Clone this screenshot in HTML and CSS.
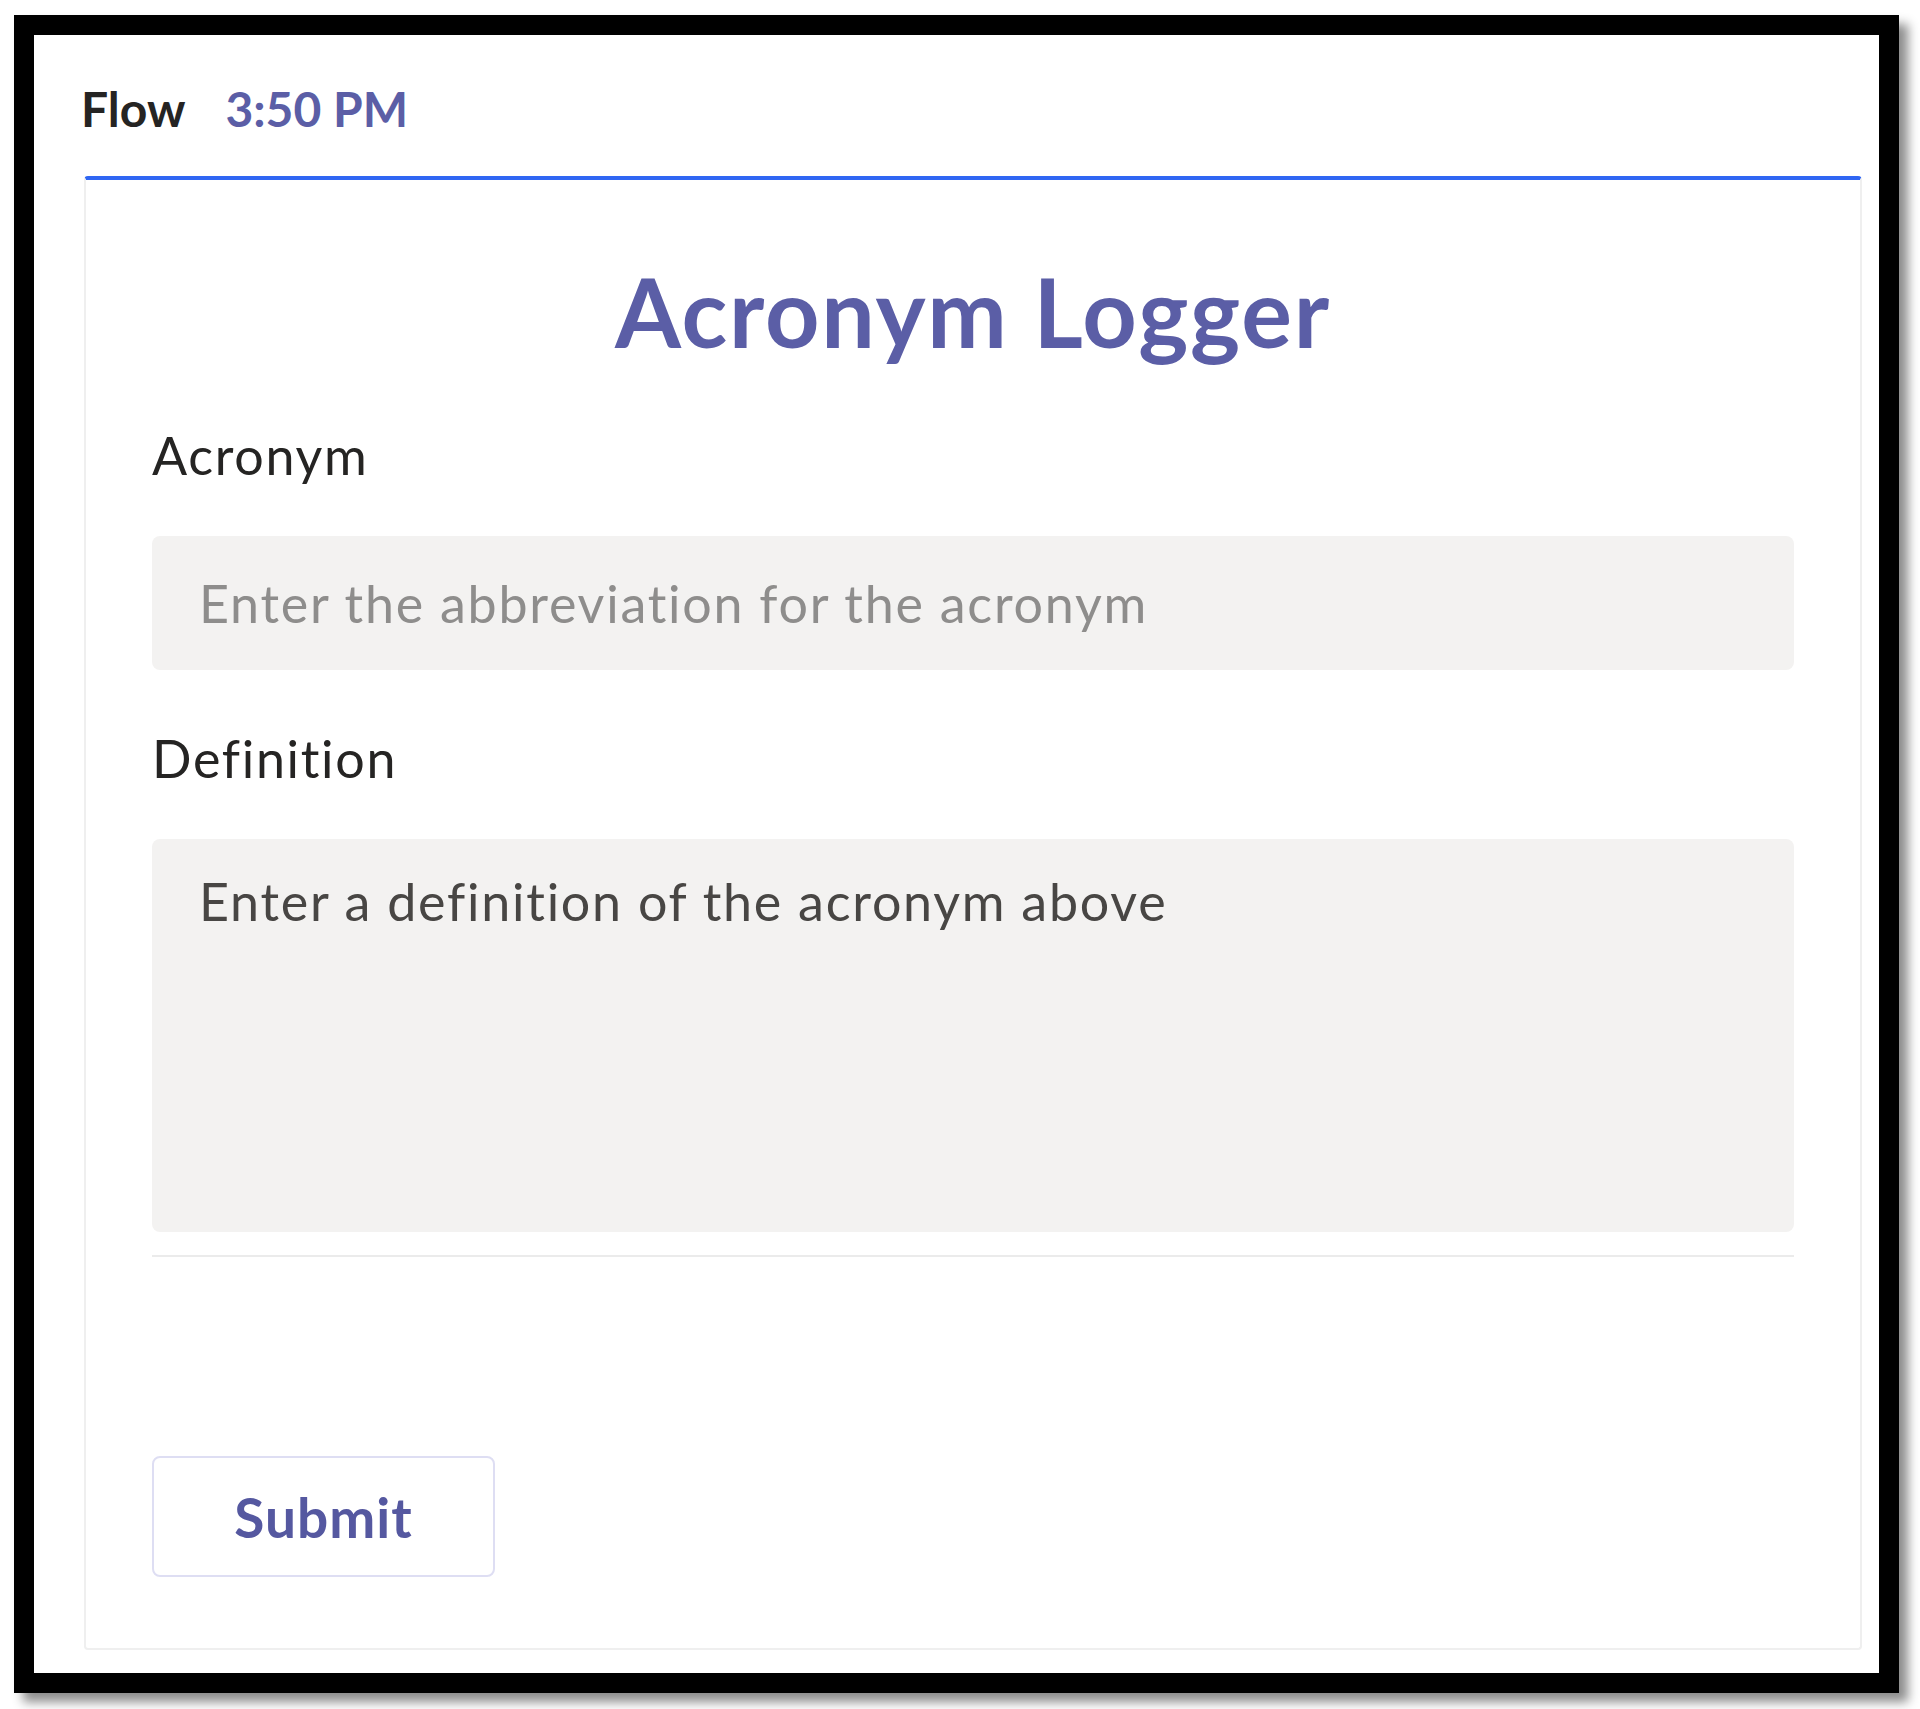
FILE: index.html
```html
<!DOCTYPE html>
<html lang="en">
<head>
<meta charset="utf-8">
<title>Acronym Logger</title>
<link rel="stylesheet" href="styles.css">
</head>
<body>
<div class="frame">
  <div class="header">
    <span class="sender">Flow</span>
    <span class="time">3:50 PM</span>
  </div>
  <div class="card">
    <h1 class="title">Acronym Logger</h1>
    <div class="field">
      <div class="label">Acronym</div>
      <div class="input placeholder">Enter the abbreviation for the acronym</div>
    </div>
    <div class="field">
      <div class="label">Definition</div>
      <div class="textarea">Enter a definition of the acronym above</div>
    </div>
    <div class="divider"></div>
    <div class="actions">
      <button class="submit" type="button">Submit</button>
    </div>
  </div>
</div>
</body>
</html>
```
FILE: styles.css
```css
html, body {
  margin: 0;
  padding: 0;
  background: #ffffff;
}
body {
  font-family: "Lato", "Open Sans", "Noto Sans", sans-serif;
  font-variant-ligatures: none;
  width: 1920px;
  height: 1709px;
  overflow: hidden;
}
.frame {
  box-sizing: border-box;
  margin: 15px 0 0 14px;
  width: 1885px;
  height: 1678px;
  border: 20px solid #000;
  background: #fff;
  box-shadow: 9px 9px 10px rgba(0, 0, 0, 0.45);
  display: flex;
  flex-direction: column;
  padding: 45px 17px 0 50px;
}
.header {
  display: flex;
  align-items: baseline;
  gap: 40px;
  height: 58px;
  line-height: 58px;
  margin-left: -3px;
  margin-bottom: 38px;
}
.sender {
  font-size: 48px;
  font-weight: 700;
  color: #252423;
}
.time {
  font-size: 48px;
  font-weight: 700;
  color: #5b5ea6;
}
.card {
  box-sizing: border-box;
  width: 1778px;
  height: 1474px;
  border: 2px solid #efefef;
  border-top: 4px solid #2f66f3;
  border-radius: 4px;
  padding: 74px 66px 0 66px;
  display: flex;
  flex-direction: column;
}
.title {
  margin: 0;
  font-size: 95px;
  line-height: 114px;
  font-weight: 700;
  letter-spacing: 1.8px;
  text-align: center;
  color: #5b5ea6;
}
.field {
  display: flex;
  flex-direction: column;
  margin-top: 56px;
}
.field + .field {
  margin-top: 57px;
}
.label {
  font-size: 52px;
  line-height: 62px;
  letter-spacing: 1.7px;
  color: #252423;
  margin-bottom: 50px;
}
.input, .textarea {
  box-sizing: border-box;
  background: #f3f2f1;
  border-radius: 8px;
  font-size: 52px;
  line-height: 62px;
  letter-spacing: 1.75px;
  padding: 0 47px;
}
.input {
  height: 134px;
  display: flex;
  align-items: center;
}
.placeholder {
  color: #8e8d8c;
}
.textarea {
  height: 393px;
  padding-top: 31px;
  color: #484644;
}
.divider {
  height: 2px;
  background: #ebebeb;
  margin-top: 23px;
}
.actions {
  margin-top: 199px;
  display: flex;
}
.submit {
  box-sizing: border-box;
  width: 343px;
  height: 121px;
  background: #fff;
  border: 2px solid #dedef3;
  border-radius: 8px;
  font-family: "Lato", "Open Sans", sans-serif;
  font-size: 55px;
  font-weight: 700;
  letter-spacing: 1px;
  color: #5558a0;
  padding: 0;
}
```
